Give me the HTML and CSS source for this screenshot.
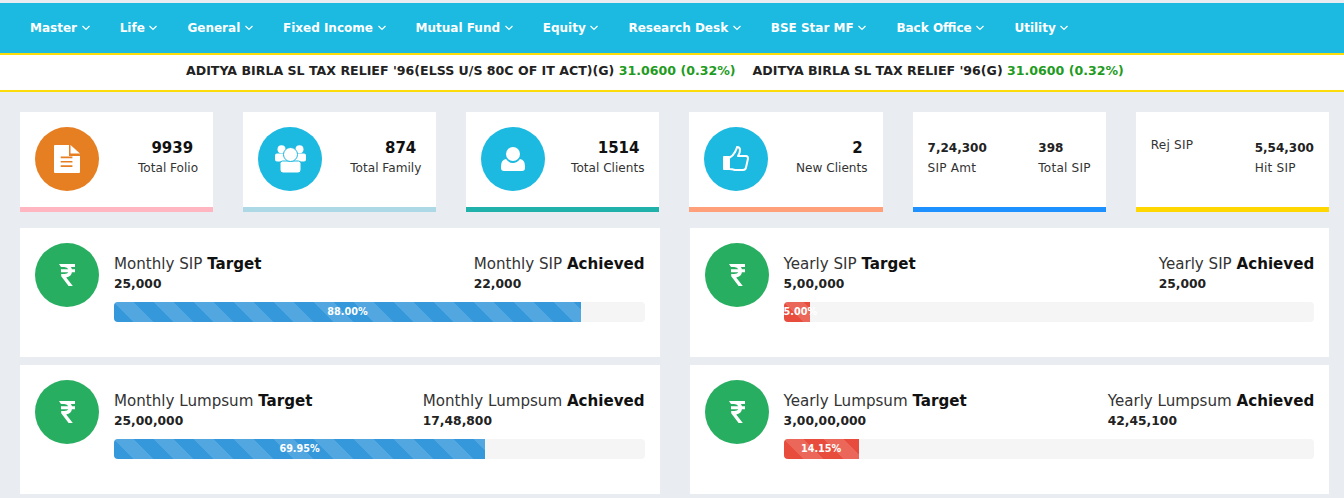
FILE: index.html
```html
<!DOCTYPE html>
<html lang="en">
<head>
  <meta charset="UTF-8">
  <title>Dashboard</title>
  <link rel="stylesheet" href="styles.css">
</head>
<body>
  <svg class="defs" width="0" height="0">
    <symbol id="chev" viewBox="0 0 8 6"><path d="M.5 1l3.500 3.500 3.500-3.500" fill="none" stroke="currentColor" stroke-width="1.2"/></symbol>
    <symbol id="rupee" viewBox="0 0 16 22"><path d="M0 0h16v3h-4.200q.8 1 1.100 2.300h3.100v3h-3.100q-.6 4.400-5.700 5.100l6.600 8.600h-4.200l-7.400-9.700v-2.300h3q3.500 0 4.200-1.700h-7.400v-3h7.300q-.7-1.800-4.100-2.300h-3.200z" fill="#fff"/></symbol>
  </svg>

  <nav class="menu">
    <a>Master <svg class="chev"><use href="#chev"/></svg></a>
    <a>Life <svg class="chev"><use href="#chev"/></svg></a>
    <a>General <svg class="chev"><use href="#chev"/></svg></a>
    <a>Fixed Income <svg class="chev"><use href="#chev"/></svg></a>
    <a>Mutual Fund <svg class="chev"><use href="#chev"/></svg></a>
    <a>Equity <svg class="chev"><use href="#chev"/></svg></a>
    <a>Research Desk <svg class="chev"><use href="#chev"/></svg></a>
    <a>BSE Star MF <svg class="chev"><use href="#chev"/></svg></a>
    <a>Back Office <svg class="chev"><use href="#chev"/></svg></a>
    <a>Utility <svg class="chev"><use href="#chev"/></svg></a>
  </nav>

  <div class="ticker">
    <span>ADITYA BIRLA SL TAX RELIEF '96(ELSS U/S 80C OF IT ACT)(G) <b>31.0600 (0.32%)</b></span>
    <span>ADITYA BIRLA SL TAX RELIEF '96(G) <b>31.0600 (0.32%)</b></span>
  </div>

  <main class="page">
    <section class="stats">
      <div class="stat pink">
        <div class="circle orange">
          <svg width="26" height="28" viewBox="0 0 26 28"><path d="M1 0h16v9.500h9v17.500a1 1 0 0 1-1 1H1a1 1 0 0 1-1-1V1a1 1 0 0 1 1-1z" fill="#fff"/><path d="M16.500 0h-1.500v11h11v-1.500z" fill="#e67e22"/><path d="M16.500 0l9.500 8.500h-9.500z" fill="#fff"/><path d="M6.700 11.500h11.700v1.700H6.700zM6.700 15.900h11.700v1.700H6.700zM6.700 20.300h11.700v1.700H6.700z" fill="#e67e22"/></svg>
        </div>
        <div class="info"><strong>9939</strong><span>Total Folio</span></div>
      </div>
      <div class="stat blue">
        <div class="circle">
          <svg width="31" height="28" viewBox="0 0 31 28"><g fill="#fff"><circle cx="6.500" cy="4.300" r="4"/><circle cx="24.500" cy="4.300" r="4"/><path d="M2 8.500h27a2 2 0 0 1 2 2v4a2 2 0 0 1-2 2H2a2 2 0 0 1-2-2v-4a2 2 0 0 1 2-2z"/><path d="M7.500 16h16a2.500 2.500 0 0 1 2.500 2.500v6.500a3 3 0 0 1-3 3H8a3 3 0 0 1-3-3v-6.500a2.500 2.500 0 0 1 2.500-2.500z" stroke="#1cb9e0" stroke-width="1"/><circle cx="15.500" cy="9.500" r="7" stroke="#1cb9e0" stroke-width="1"/></g></svg>
        </div>
        <div class="info"><strong>874</strong><span>Total Family</span></div>
      </div>
      <div class="stat teal">
        <div class="circle">
          <svg width="24" height="24" viewBox="0 0 24 24"><g fill="#fff"><circle cx="12" cy="7" r="7"/><path d="M5 12q3 4 7 4t7-4q5 1 5 7v2a3 3 0 0 1-3 3H3a3 3 0 0 1-3-3v-2q0-6 5-7z"/></g></svg>
        </div>
        <div class="info"><strong>1514</strong><span>Total Clients</span></div>
      </div>
      <div class="stat salmon">
        <div class="circle">
          <svg width="26" height="26" viewBox="0 0 26 26"><path d="M1 11h5v12H1zM6 12q4-2 6-6t2-5q3 0 3 3t-2 6h8q2 0 2 2.500l-2 9q-.5 2.500-3 2.500H12q-3-1-6-1" fill="none" stroke="#fff" stroke-width="2" stroke-linejoin="round"/><path d="M1 11h5v12H1z" fill="#fff"/></svg>
        </div>
        <div class="info"><strong>2</strong><span>New Clients</span></div>
      </div>
      <div class="stat azure split">
        <div class="col"><strong>7,24,300</strong><span>SIP Amt</span></div>
        <div class="col"><strong>398</strong><span>Total SIP</span></div>
      </div>
      <div class="stat gold split rej">
        <div class="col top"><span>Rej SIP</span></div>
        <div class="col"><strong>5,54,300</strong><span>Hit SIP</span></div>
      </div>
    </section>

    <section class="targets">
      <div class="target">
        <div class="circle green"><svg class="rs" width="16" height="22"><use href="#rupee"/></svg></div>
        <div class="body">
          <div class="heads">
            <div><p>Monthly SIP <b>Target</b></p><strong>25,000</strong></div>
            <div><p>Monthly SIP <b>Achieved</b></p><strong>22,000</strong></div>
          </div>
          <div class="track"><div class="bar sky" style="width:88%">88.00%</div></div>
        </div>
      </div>
      <div class="target">
        <div class="circle green"><svg class="rs" width="16" height="22"><use href="#rupee"/></svg></div>
        <div class="body">
          <div class="heads">
            <div><p>Yearly SIP <b>Target</b></p><strong>5,00,000</strong></div>
            <div><p>Yearly SIP <b>Achieved</b></p><strong>25,000</strong></div>
          </div>
          <div class="track"><div class="bar red" style="width:5%">5.00%</div></div>
        </div>
      </div>
      <div class="target">
        <div class="circle green"><svg class="rs" width="16" height="22"><use href="#rupee"/></svg></div>
        <div class="body">
          <div class="heads">
            <div><p>Monthly Lumpsum <b>Target</b></p><strong>25,00,000</strong></div>
            <div><p>Monthly Lumpsum <b>Achieved</b></p><strong>17,48,800</strong></div>
          </div>
          <div class="track"><div class="bar sky" style="width:69.95%">69.95%</div></div>
        </div>
      </div>
      <div class="target">
        <div class="circle green"><svg class="rs" width="16" height="22"><use href="#rupee"/></svg></div>
        <div class="body">
          <div class="heads">
            <div><p>Yearly Lumpsum <b>Target</b></p><strong>3,00,00,000</strong></div>
            <div><p>Yearly Lumpsum <b>Achieved</b></p><strong>42,45,100</strong></div>
          </div>
          <div class="track"><div class="bar red" style="width:14.15%">14.15%</div></div>
        </div>
      </div>
    </section>
  </main>
</body>
</html>
```
FILE: styles.css
```css
html, body {
  margin: 0;
  height: 498px;
  overflow: hidden;
}
body {
  font-family: "DejaVu Sans", Verdana, sans-serif;
  background: #e9ecf1;
  color: #333;
  padding-top: 3px;
  box-sizing: border-box;
}
.defs {
  display: block;
  height: 0;
}

/* top menu */
.menu {
  display: flex;
  height: 50px;
  padding-left: 15px;
  align-items: center;
  background: #1cb9e0;
  border-bottom: 2px solid #fcdc0a;
}
.menu a {
  padding: 0 15px;
  color: #fff;
  font-size: 12px;
  font-weight: bold;
  white-space: nowrap;
}
.chev {
  width: 8px;
  height: 6px;
  margin-left: .5px;
  vertical-align: 1px;
}

/* ticker */
.ticker {
  display: flex;
  gap: 17px;
  height: 31px;
  padding: 0 0 4px 186px;
  align-items: center;
  background: #fff;
  border-bottom: 2px solid #fcdc0a;
  color: #222;
  font-size: 12.58px;
  font-weight: bold;
}
.ticker b {
  color: #1f9b1f;
}

.page {
  padding: 20px 15.1px 0 20px;
}

/* small cards */
.stats {
  display: grid;
  grid-template-columns: repeat(6, 1fr);
  gap: 30px;
}
.stat {
  display: flex;
  height: 65px;
  padding: 15px;
  background: #fff;
  border-bottom: 5px solid #ccc;
  justify-content: space-between;
  font-size: 12.1px;
}
.pink { border-color: #ffb6c1; }
.blue { border-color: #add8e6; }
.teal { border-color: #20b2aa; }
.salmon { border-color: #ffa07a; }
.azure { border-color: #1e90ff; }
.gold { border-color: #ffd700; }

.circle {
  display: flex;
  flex: none;
  width: 64px;
  height: 64px;
  border-radius: 50%;
  background: #1cb9e0;
  align-items: center;
  justify-content: center;
}
.orange { background: #e67e22; }
.green { background: #27ae60; }

.info {
  display: flex;
  flex-direction: column;
  align-items: flex-end;
  padding-top: 11px;
}
.info strong {
  padding-right: 5px;
  color: #111;
  font-size: 15px;
  line-height: 20px;
}
.info span, .col span {
  line-height: 20px;
}
.col {
  display: flex;
  flex-direction: column;
  padding-top: 11px;
}
.col span {
  letter-spacing: .2px;
}
.col strong {
  color: #222;
  font-size: 12px;
  line-height: 20px;
}
.col.top {
  padding-top: 8px;
}

/* target panels */
.targets {
  display: grid;
  grid-template-columns: 639.6px 639.6px;
  gap: 8px 30px;
  margin-top: 16px;
}
.target {
  display: flex;
  height: 99px;
  padding: 15px;
  gap: 15px;
  background: #fff;
}
.body {
  flex: 1;
}
.heads {
  display: flex;
  justify-content: space-between;
  padding-top: 11px;
}
.heads p {
  margin: 0;
  color: #333;
  font-size: 15.1px;
  line-height: 20px;
}
.heads b {
  color: #111;
}
.heads strong {
  display: block;
  color: #222;
  font-size: 12.3px;
  line-height: 20px;
}
.track {
  height: 20px;
  margin-top: 8px;
  border-radius: 4px;
  background: #f5f5f5;
  overflow: hidden;
}
.bar {
  height: 20px;
  color: #fff;
  font-size: 9.7px;
  font-weight: bold;
  line-height: 20px;
  text-align: center;
  white-space: nowrap;
  background-size: 40px 40px;
  background-image: linear-gradient(45deg, rgba(255,255,255,.15) 25%, transparent 25%, transparent 50%, rgba(255,255,255,.15) 50%, rgba(255,255,255,.15) 75%, transparent 75%, transparent);
}
.sky { background-color: #3498db; }
.red { background-color: #e74c3c; }
```
